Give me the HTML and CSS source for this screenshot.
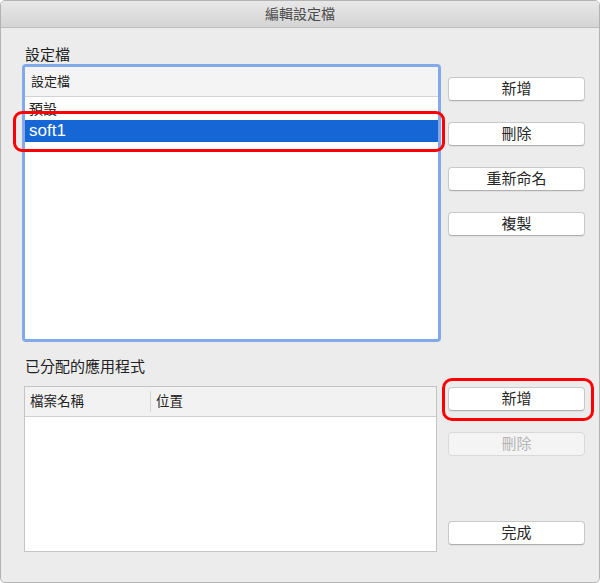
FILE: index.html
```html
<!DOCTYPE html>
<html lang="zh-Hant">
<head>
    <meta charset="UTF-8">
    <meta name="viewport" content="width=device-width, initial-scale=1.0">
    <title>編輯設定檔</title>
    <link rel="stylesheet" href="styles.css">
</head>
<body>
    <div class="window">
        <!-- Barra de título -->
        <div class="titlebar">編輯設定檔</div>

        <div class="content">
            <!-- Lista de perfiles -->
            <div class="row">
                <div class="left">
                    <div class="label">設定檔</div>
                    <div class="profile-list">
                        <div class="list-header">設定檔</div>
                        <div class="list-item">預設</div>
                        <div class="list-item selected">soft1</div>
                    </div>
                </div>
                <div class="buttons top-buttons">
                    <button class="btn">新增</button>
                    <button class="btn">刪除</button>
                    <button class="btn">重新命名</button>
                    <button class="btn">複製</button>
                </div>
            </div>

            <!-- Aplicaciones asignadas -->
            <div class="row apps">
                <div class="left">
                    <div class="label">已分配的應用程式</div>
                    <div class="app-table">
                        <div class="table-header">
                            <div class="col col-name">檔案名稱</div>
                            <div class="col col-place">位置</div>
                        </div>
                    </div>
                </div>
                <div class="buttons bottom-buttons">
                    <button class="btn">新增</button>
                    <button class="btn" disabled>刪除</button>
                    <button class="btn done">完成</button>
                </div>
            </div>
        </div>

        <!-- Marcas rojas -->
        <div class="mark mark-row"></div>
        <div class="mark mark-button"></div>
    </div>
</body>
</html>
```

FILE: styles.css
```css
body {
    margin: 0;
    font-family: "Liberation Sans", "Noto Sans CJK TC", sans-serif;
    background-color: #ffffff;
}
.window {
    position: relative;
    width: 600px;
    height: 583px;
    box-sizing: border-box;
    border: 1px solid #b3b3b3;
    border-radius: 5px;
    background-color: #ececec;
    overflow: hidden;
}
.titlebar {
    height: 26px;
    line-height: 26px;
    border-bottom: 1px solid #bcbcbc;
    background: linear-gradient(#e8e8e8, #d4d4d4);
    text-align: center;
    font-size: 14px;
    color: #4a4a4a;
}
.content {
    padding: 18px 13px 0 21px;
}
.row {
    display: flex;
    gap: 7px;
}
.left {
    width: 419px;
}
.label {
    height: 18px;
    line-height: 18px;
    font-size: 15px;
    color: #222;
    padding-left: 3px;
}
.profile-list {
    height: 278px;
    box-sizing: border-box;
    border: 3px solid #82aaea;
    border-radius: 4px;
    background-color: #fff;
    overflow: hidden;
}
.list-header {
    height: 29px;
    line-height: 29px;
    border-bottom: 1px solid #d2d2d2;
    background-color: #f4f4f4;
    font-size: 13px;
    color: #222;
    padding-left: 6px;
}
.list-item {
    height: 23px;
    line-height: 25px;
    font-size: 14px;
    color: #222;
    padding-left: 4px;
    overflow: hidden;
}
.list-item.selected {
    height: 22px;
    line-height: 22px;
    background-color: #1766d6;
    color: #fff;
    font-size: 17px;
}
.buttons {
    display: flex;
    flex-direction: column;
    width: 137px;
}
.btn {
    height: 24px;
    box-sizing: border-box;
    border: 1px solid #c9c9c9;
    border-bottom-color: #b0b0b0;
    border-radius: 4px;
    background-color: #fff;
    box-shadow: 0 1px 1px rgba(0, 0, 0, 0.06);
    font-family: "Liberation Sans", "Noto Sans CJK TC", sans-serif;
    font-size: 15px;
    line-height: 20px;
    color: #262626;
    padding: 0;
    margin-bottom: 21px;
}
.btn:disabled {
    background-color: #f4f4f4;
    border-color: #d9d9d9;
    color: #b5b5b5;
    box-shadow: none;
}
.top-buttons {
    margin-top: 31px;
}
.apps {
    margin-top: 16px;
}
.bottom-buttons {
    margin-top: 29px;
}
.btn.done {
    margin-top: 44px;
}
.app-table {
    margin: 10px 0 0 2px;
    width: 413px;
    height: 166px;
    box-sizing: border-box;
    border: 1px solid #c4c4c4;
    background-color: #fff;
}
.table-header {
    display: flex;
    height: 29px;
    border-bottom: 1px solid #cfcfcf;
    background-color: #f2f2f2;
    font-size: 13.5px;
    color: #222;
}
.col {
    line-height: 29px;
    padding-left: 5px;
}
.col-name {
    width: 120px;
    border-right: 1px solid #d6d6d6;
    margin: 4px 0;
    line-height: 21px;
}
.col-place {
    padding-left: 5px;
}
.mark {
    position: absolute;
    border: 3px solid #f00;
    box-sizing: border-box;
}
.mark-row {
    left: 12px;
    top: 110px;
    width: 432px;
    height: 41px;
    border-radius: 9px;
}
.mark-button {
    left: 441px;
    top: 377px;
    width: 152px;
    height: 43px;
    border-radius: 10px;
}
```
